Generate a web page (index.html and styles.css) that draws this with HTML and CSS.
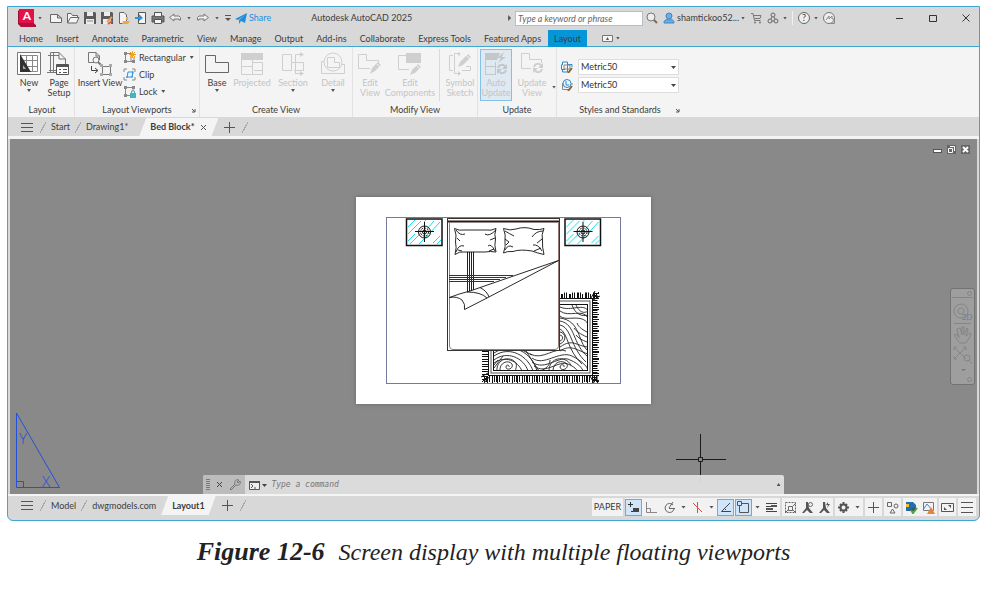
FILE: index.html
```html
<!doctype html>
<html lang="en">
    <head>
        <meta charset="utf-8">
        <title>Figure 12-6</title>
        <link rel="stylesheet" href="styles.css">
    </head>
    <body>
        <div class="window">
            <!-- Quick access toolbar and title -->
            <header class="titlebar">
                <button class="app-button" aria-label="Application menu">
                    <svg width="18" height="18" viewBox="0 0 18 18"><path d="M0 2 2 0H16V15L18 16V18H3L0 15Z" fill="#9c0f35"/><path d="M1 0H16V14H1Z" fill="#e3104a"/><path d="M3 18 1 14H16L18 18Z" fill="#b50d3b"/><text x="9" y="11" class="logo-letter">A</text></svg>
                    <i class="caret"></i>
                </button>
                <div class="quick">
                    <button aria-label="New"><svg width="14" height="14" viewBox="0 0 14 14"><path d="M1.500 3.500H8.500L12.500 7V11.500H1.500ZM8.500 3.500V7H12.500" fill="#f4f4f4" stroke="#666"/></svg></button>
                    <button aria-label="Open"><svg width="14" height="14" viewBox="0 0 14 14"><path d="M1.500 12V2.500H5L6.500 4.500H11.500V6.500M1.500 12 4.500 6.500H13L10.500 12Z" fill="#f4f4f4" stroke="#666"/></svg></button>
                    <button aria-label="Save"><svg width="14" height="14" viewBox="0 0 14 14"><path d="M1 1H12L13 2V13H1Z" fill="#5b5b5b"/><path d="M4 1H10V5H4ZM3 8H11V13H3Z" fill="#ececec"/><path d="M4 10H10" stroke="#888"/></svg></button>
                    <button aria-label="Save as"><svg width="14" height="14" viewBox="0 0 14 14"><path d="M1 1H12L13 2V13H1Z" fill="#5b5b5b"/><path d="M4 1H10V5H4ZM3 8H11V13H3Z" fill="#ececec"/><path d="M7 11 12 6" stroke="#f29a38" stroke-width="2"/><path d="M8 13 12 10" stroke="#e45a3a" stroke-width="2"/></svg></button>
                    <button aria-label="Open from web"><svg width="14" height="14" viewBox="0 0 14 14"><path d="M2.500 1.500H7L9.500 4V12.500H2.500Z" fill="#f4f4f4" stroke="#666"/><path d="M6 10H13L11 13H5Z" fill="#f0a93c"/><path d="M10 6V9" stroke="#f0a93c" stroke-width="2"/></svg></button>
                    <button aria-label="Save to mobile"><svg width="14" height="14" viewBox="0 0 14 14"><path d="M4.500 1.500H11.500V12.500H4.500Z" fill="#f4f4f4" stroke="#555"/><path d="M1 6H5V3L9 7 5 10V8H1Z" fill="#2a93dc"/></svg></button>
                    <button aria-label="Plot"><svg width="14" height="14" viewBox="0 0 14 14"><path d="M3.500 5V1.500H10.500V5M1 5H13V11H1Z" fill="#777" stroke="#555"/><path d="M3.500 8.500H10.500V12.500H3.500Z" fill="#f4f4f4" stroke="#555"/><path d="M4 2H10V5H4Z" fill="#f4f4f4"/></svg></button>
                    <button aria-label="Undo"><svg width="14" height="14" viewBox="0 0 14 14"><path d="M1.500 6.500 6 3V5H11L12.500 6.500V9H11V8H6V10Z" fill="#eee" stroke="#777"/></svg></button>
                    <i class="caret"></i>
                    <button aria-label="Redo"><svg width="14" height="14" viewBox="0 0 14 14"><path d="M12.500 6.500 8 3V5H3L1.500 6.500V9H3V8H8V10Z" fill="#eee" stroke="#777"/></svg></button>
                    <i class="caret"></i>
                    <button aria-label="Customize"><svg width="8" height="8" viewBox="0 0 8 8"><path d="M1 1.500H7" stroke="#555"/><path d="M1 4H7L4 7Z" fill="#555"/></svg></button>
                </div>
                <button class="share"><svg width="12" height="12" viewBox="0 0 12 12"><path d="M0 7 12 1 10 11 6 9 4 12 4 8 10 3 3 8Z" fill="#1c90e0"/></svg>Share</button>
                <h1 class="app-title">Autodesk AutoCAD 2025</h1>
                <i class="caret right"></i>
                <input class="search" type="search" aria-label="Search" placeholder="Type a keyword or phrase">
                <div class="account">
                    <button aria-label="Find"><svg width="12" height="12" viewBox="0 0 12 12"><circle cx="5" cy="5" r="4" fill="#eee" stroke="#777"/><path d="M8 8 11 11" stroke="#8a6a4a" stroke-width="2"/></svg></button>
                    <button class="user"><svg width="12" height="12" viewBox="0 0 12 12"><circle cx="6" cy="4" r="3" fill="#6aaee6" stroke="#3d86c4"/><path d="M1 11C1 8 3 7 6 8 9 7 11 8 11 11Z" fill="#6aaee6" stroke="#3d86c4"/></svg>shamtickoo52...<i class="caret"></i></button>
                    <button aria-label="App store"><svg width="12" height="12" viewBox="0 0 12 12"><path d="M1 1.500H3L4.500 8.500H10.500M3.500 3.500H11L10 6.500H4.500" fill="none" stroke="#777"/><circle cx="5" cy="10.500" r="1" fill="#777"/><circle cx="10" cy="10.500" r="1" fill="#777"/></svg></button>
                    <button aria-label="Connections"><svg width="12" height="12" viewBox="0 0 12 12"><g fill="none" stroke="#666"><circle cx="6" cy="3" r="2"/><circle cx="3" cy="9" r="2"/><circle cx="9" cy="9" r="2"/><path d="M5 5 4 7M7 5 8 7M5 9H7"/></g></svg><i class="caret"></i></button>
                    <span class="divider"></span>
                    <button><span class="help">?</span><i class="caret"></i></button>
                    <button aria-label="Assistant"><svg width="12" height="12" viewBox="0 0 12 12"><circle cx="6" cy="6" r="5.500" fill="#eee" stroke="#777"/><path d="M3 8 6 4 6 7 9 4V7H11" fill="none" stroke="#888"/><path d="M8 11.500H11.500V7" fill="none" stroke="#888"/></svg></button>
                </div>
                <div class="window-controls">
                    <button aria-label="Minimize"><svg width="10" height="10" viewBox="0 0 10 10"><path d="M1 5.500H8" stroke="#333"/></svg></button>
                    <button aria-label="Maximize"><svg width="10" height="10" viewBox="0 0 10 10"><path d="M1.500 2.500H8.500V8.500H1.500Z" fill="none" stroke="#333"/></svg></button>
                    <button aria-label="Close"><svg width="10" height="10" viewBox="0 0 10 10"><path d="M1.500 1.500 8.500 8.500M8.500 1.500 1.500 8.500" stroke="#333"/></svg></button>
                </div>
            </header>

            <nav class="ribbon-tabs">
                <a href="#">Home</a>
                <a href="#">Insert</a>
                <a href="#">Annotate</a>
                <a href="#">Parametric</a>
                <a href="#">View</a>
                <a href="#">Manage</a>
                <a href="#">Output</a>
                <a href="#">Add-ins</a>
                <a href="#">Collaborate</a>
                <a href="#">Express Tools</a>
                <a href="#">Featured Apps</a>
                <a href="#" class="active">Layout</a>
                <button class="ribbon-toggle" aria-label="Minimize ribbon"><svg width="11" height="7" viewBox="0 0 11 7"><path d="M.5.500H10.500V6.500H.5Z" fill="#f4f4f4" stroke="#777"/><path d="M4 5H7L5.500 2Z" fill="#555"/></svg><i class="caret"></i></button>
            </nav>

            <section class="ribbon">
                <div class="panel">
                    <div class="tools tools-layout">
                        <button class="big"><svg width="24" height="24" viewBox="0 0 24 24"><path d="M.5.500H23.500V22.500H.5Z" fill="#fff" stroke="#777"/><path d="M3.500 3.500H20.500V19.500H3.500ZM9.500 3.500V19.500M15.500 3.500V19.500M3.500 8.500H20.500M3.500 14.500H20.500" fill="none" stroke="#888"/><path d="M3 2V20H14Z" fill="#333"/><path d="M6 13V17H9Z" fill="#aaa"/></svg><span>New</span><i class="caret"></i></button>
                        <button class="big"><svg width="24" height="24" viewBox="0 0 24 24"><path d="M3.500 20.500V.5H12L18.500 7V12M12 .5V7H18.500M1 3.500H12M6.500 0V21M2 18.500H9M0 20.500H9" fill="none" stroke="#777"/><path d="M9.500 12.500H21.500V22.500H9.500Z" fill="#fff" stroke="#555"/><path d="M10 14H21" stroke="#555" stroke-width="2"/><path d="M12 17.500H14M16 17.500H20M12 20.500H14M16 20.500H20" stroke="#555"/></svg><span>Page<br>Setup</span></button>
                    </div>
                    <h2>Layout</h2>
                </div>
                <div class="panel">
                    <div class="tools tools-viewports">
                        <button class="big"><svg width="24" height="24" viewBox="0 0 24 24"><path d="M6 10.500H.5V.5H8L11.500 4V8M8 .5V4H11.500" fill="none" stroke="#777"/><circle cx="8" cy="8" r="3" fill="#f4f4f4" stroke="#777"/><path d="M10 10 14 14" stroke="#777" stroke-width="2"/><path d="M3.500 14V18.500H9M7 16 10 18.500 7 21" fill="none" stroke="#444"/><path d="M14.500 14.500H22.500V22.500H14.500Z" fill="none" stroke="#777"/><path d="M12 12H15V15H12ZM21 12H24V15H21ZM12 21H15V24H12ZM21 21H24V24H21Z" fill="#aaa"/></svg><span>Insert View</span></button>
                        <div class="stack">
                            <button class="small"><svg width="13" height="13" viewBox="0 0 13 13"><path d="M2.500 2.500H8V10.500H2.500ZM8 10.500H11V6" fill="none" stroke="#888"/><path d="M1 1H4V4H1ZM1 9H4V12H1ZM9 9H12V12H9Z" fill="#888"/><path d="M9.500 0V7M6 3.500H13M7 1 12 6M12 1 7 6" stroke="#f3a229"/></svg>Rectangular<i class="caret"></i></button>
                            <button class="small"><svg width="13" height="13" viewBox="0 0 13 13"><path d="M1 4V1H4M9 1H12V4M12 9V12H9M4 12H1V9" fill="none" stroke="#888"/><path d="M4 10 5 4H10L9 9H3M10 3 9 10" fill="none" stroke="#2a93dc"/></svg>Clip</button>
                            <button class="small"><svg width="13" height="13" viewBox="0 0 13 13"><path d="M2.500 2.500H10V6M2.500 2.500V10.500H7" fill="none" stroke="#888"/><path d="M1 1H4V4H1ZM1 9H4V12H1ZM9 1H12V4H9Z" fill="#888"/><path d="M7 8H13V13H7Z" fill="#3fb5bd"/><path d="M8.500 8V6H11.500V8" fill="none" stroke="#3fb5bd"/></svg>Lock<i class="caret"></i></button>
                        </div>
                    </div>
                    <h2>Layout Viewports</h2>
                    <button class="launcher" aria-label="Layout viewport settings"><svg width="5" height="5" viewBox="0 0 5 5"><path d="M1 1 4 4M4 1V4H1" fill="none" stroke="#555"/></svg></button>
                </div>
                <div class="panel">
                    <div class="tools tools-create">
                        <button class="big"><svg width="24" height="24" viewBox="0 0 24 24"><path d="M.5 3.500H10.500V10.500H23.500V20.500H.5Z" fill="none" stroke="#666"/></svg><span>Base</span><i class="caret"></i></button>
                        <button class="big" disabled><svg width="24" height="24" viewBox="0 0 24 24"><path d="M1 1H23V8H1Z" fill="#cfcfcf"/><path d="M1.500 8V22.500H12.500V8M1.500 14.500H12.500M12.500 10.500H22.500V22.500H12.500M14 .5V6M14 18.500H22" fill="none" stroke="#cfcfcf"/></svg><span>Projected</span></button>
                        <button class="big" disabled><svg width="24" height="24" viewBox="0 0 24 24"><path d="M1.500 2.500H10.500V18.500H1.500ZM10.500 10.500H22.500V18.500H13M14.500 22V2.500H20M14.500 21.500H20" fill="none" stroke="#cfcfcf"/><path d="M19 0 23 2.500 19 5ZM19 19 23 21.500 19 24Z" fill="#cfcfcf"/></svg><span>Section</span><i class="caret"></i></button>
                        <button class="big" disabled><svg width="24" height="24" viewBox="0 0 24 24"><path d="M3 9.500H.5V21.500H23.500V12.500H21" fill="none" stroke="#cfcfcf"/><circle cx="12" cy="10" r="9" fill="none" stroke="#cfcfcf"/><path d="M6.500 5.500H13.500V10.500H18.500V15.500H6.500Z" fill="none" stroke="#cfcfcf"/></svg><span>Detail</span><i class="caret"></i></button>
                    </div>
                    <h2>Create View</h2>
                </div>
                <div class="panel">
                    <div class="tools tools-modify">
                        <button class="big" disabled><svg width="24" height="24" viewBox="0 0 24 24"><path d="M.5 2.500H8.500V8.500H20.500V11M.5 2.500V16.500H12" fill="none" stroke="#cfcfcf"/><path d="M12 22 14 16 20 10 23 13 17 19Z" fill="#cfcfcf"/><path d="M19 12 22 15" stroke="#f4f4f4"/></svg><span>Edit<br>View</span></button>
                        <button class="big" disabled><svg width="24" height="24" viewBox="0 0 24 24"><path d="M9 3.500H.5V17.500H11" fill="none" stroke="#cfcfcf"/><path d="M8 1H23V11H8Z" fill="#cfcfcf"/><path d="M12 23 14 18 20 12 23 15 17 21Z" fill="#cfcfcf"/><path d="M18 13 22 17" stroke="#f4f4f4"/></svg><span>Edit<br>Components</span></button>
                        <span class="tool-divider"></span>
                        <button class="big" disabled><svg width="24" height="24" viewBox="0 0 24 24"><path d="M5 3.500H1.500V18.500H5M10 1.500H6.500V21.500H10M18 14.500H22.500V18.500H14" fill="none" stroke="#cfcfcf"/><path d="M10 0 13 2 10 4ZM10 19 13 21.500 10 24Z" fill="#cfcfcf"/><path d="M10 15 12 10 20 2 23 5 15 13Z" fill="#cfcfcf"/><path d="M18 3 22 7" stroke="#f4f4f4"/></svg><span>Symbol<br>Sketch</span></button>
                    </div>
                    <h2>Modify View</h2>
                </div>
                <div class="panel">
                    <div class="tools tools-update">
                        <button class="big pressed" disabled><svg width="24" height="24" viewBox="0 0 24 24"><path d="M1 1H16L13 8H1Z" fill="#c3c7ca"/><path d="M1.500 8V22.500H12M1.500 14.500H12M11.500 10V22" fill="none" stroke="#c3c7ca"/><path d="M20 0 13 6H17L14 11 22 5H18Z" fill="#c3c7ca"/><path d="M14 16C15 12 20 12 21 15M22 18C21 22 16 22 15 19" fill="none" stroke="#c3c7ca" stroke-width="2"/><path d="M23 12V17H18ZM13 22V17H18Z" fill="#c3c7ca"/></svg><span>Auto<br>Update</span></button>
                        <button class="big" disabled><svg width="24" height="24" viewBox="0 0 24 24"><path d="M11 16.500H1.500V1.500H9.500V7.500H21.500V11" fill="none" stroke="#cfcfcf"/><path d="M14 15C15 11 20 11 21 14M22 17C21 21 16 21 15 18" fill="none" stroke="#cfcfcf" stroke-width="2"/><path d="M23 11V16H18ZM13 21V16H18Z" fill="#cfcfcf"/></svg><span>Update<br>View</span></button>
                        <i class="caret update-caret"></i>
                    </div>
                    <h2>Update</h2>
                </div>
                <div class="panel last">
                    <div class="tools tools-styles">
                        <svg width="12" height="12" viewBox="0 0 12 12"><path d="M1.500 4V1H6.500V11H1.500V8M.5 3.500V8.500H4M6 3.500H11V6" fill="none" stroke="#2a8ad0"/><path d="M3 4H9V8H3Z" fill="none" stroke="#888"/><path d="M7 12 11 7" stroke="#8a6232" stroke-width="2"/></svg>
                        <span class="combo"><select aria-label="Section view style"><option>Metric50</option></select></span>
                        <svg width="12" height="12" viewBox="0 0 12 12"><path d="M1.500 4V10.500H7M11 4V6" fill="none" stroke="#888"/><circle cx="6" cy="4.500" r="4" fill="none" stroke="#2a8ad0"/><path d="M5 2V6H8" fill="none" stroke="#2a8ad0"/><path d="M7 12 11 7" stroke="#8a6232" stroke-width="2"/></svg>
                        <span class="combo"><select aria-label="Detail view style"><option>Metric50</option></select></span>
                    </div>
                    <h2>Styles and Standards</h2>
                    <button class="launcher" aria-label="Style settings"><svg width="5" height="5" viewBox="0 0 5 5"><path d="M1 1 4 4M4 1V4H1" fill="none" stroke="#555"/></svg></button>
                </div>
            </section>

            <nav class="tabs file-tabs">
                <button class="menu" aria-label="File tab menu"></button>
                <span class="slash"></span>
                <a href="#">Start</a>
                <span class="slash"></span>
                <a href="#">Drawing1*</a>
                <a href="#" class="active">Bed Block* <svg width="7" height="7" viewBox="0 0 7 7"><path d="M1 1 6 6M6 1 1 6" stroke="#555"/></svg></a>
                <button class="add" aria-label="New drawing"></button>
                <span class="slash"></span>
            </nav>

            <main class="canvas">
                <svg class="paper" width="295" height="207" viewBox="356 197 295 207">
                    <rect x="356" y="197" width="295" height="207" fill="#fff"/>
                    <!-- Rug -->
                    <g fill="none" stroke="#111">
                        <path d="M484 379.500H598" stroke-width="7" stroke-dasharray="1 1 2 1 1 2 1 1"/>
                        <path d="M484 382.500H598" stroke-width="1" stroke="#fff" stroke-dasharray="3 2 1 4"/>
                        <path d="M540 295.500H598" stroke-width="6" stroke-dasharray="1 1 1 2 2 1"/>
                        <path d="M540 293H598" stroke-width="2" stroke="#fff" stroke-dasharray="3 4 2 5"/>
                        <path d="M596 293V381" stroke-width="6" stroke-dasharray="1 1 2 1 1 1"/>
                        <path d="M598.500 294V380" stroke-width="2" stroke="#fff" stroke-dasharray="2 3 4 2"/>
                        <path d="M485 351V381" stroke-width="6" stroke-dasharray="1 2 1 1"/>
                        <path d="M593 298 599 292M593 300 600 296M591 298 595 291M592 376 599 382M590 376 594 383M488 376 482 382M490 376 484 383M488 373 481 377"/>
                    </g>
                    <rect x="488.500" y="298.500" width="104" height="77" fill="#fff" stroke="#111"/>
                    <rect x="491" y="301" width="99" height="72" fill="none" stroke="#555"/>
                    <rect x="493.500" y="304.500" width="94" height="66" fill="#fff" stroke="#111"/>
                    <clipPath id="rug"><rect x="494" y="305" width="93" height="65"/></clipPath>
                    <g clip-path="url(#rug)" fill="none" stroke="#222" stroke-width=".9">
                        <path d="M494 356C510 345 528 356 533 371M494 353C513 341 532 353 537 371M494 360C507 350 524 358 528 371M494 363C505 355 518 361 522 371"/>
                        <path d="M500 371C499 363 508 359 512 364 514 369 506 371 506 367 506 364 510 365 509 367M497 371C496 359 510 355 516 363 517 366 516 369 515 371"/>
                        <path d="M532 362C545 372 560 354 570 360 580 364 584 370 584 375M532 358C544 367 559 350 572 356 582 361 588 367 588 371M534 366C546 375 558 360 568 364 577 368 578 371 578 375M530 354C543 361 555 346 566 351"/>
                        <path d="M553 371C553 362 562 359 567 364 569 369 561 372 560 367 560 364 565 364 564 367M549 371C549 357 565 355 571 365"/>
                        <path d="M560 321C576 324 572 344 588 357M560 318C581 321 577 341 588 351M560 325C572 328 570 347 586 362M560 329C568 333 567 350 582 364"/>
                        <path d="M560 316C566 322 582 313 588 324M560 311C569 318 583 308 588 318M560 307C571 312 584 302 589 312M572 305C575 314 582 317 588 315M576 305C579 312 584 314 588 311"/>
                        <path d="M560 332C566 333 567 341 560 344M560 335C564 336 563 340 560 341M560 347C573 338 576 346 588 347M560 351C571 344 576 350 588 354"/>
                        <path d="M587 332C581 329 578 326 577 323M587 337C580 334 576 331 574 328M587 342C582 340 578 338 576 335M494 368 503 356M494 365 498 360M526 351 539 371M522 350 532 355M541 371C546 368 550 366 550 360"/>
                    </g>
                    <!-- Bed -->
                    <rect x="447.500" y="218.500" width="112" height="132" fill="#fff" stroke="#333"/>
                    <path d="M448 221.500H559" stroke="#2b1717" stroke-width="2"/>
                    <path d="M449.500 222V346Q449.500 349.500 453 349.500H555Q558.500 349.500 558.500 346V222" fill="none" stroke="#967c78"/>
                    <g fill="none" stroke="#222">
                        <path d="M467.500 252V292M469.500 252V291M471.500 252V291M473.500 252V290"/>
                        <path d="M449 275.500H513M449 277.500H506M449 279.500H500M449 281.500H494" stroke="#333"/>
                    </g>
                    <g fill="#fff" stroke="#111" stroke-width=".9">
                        <path d="M454.500 228.500Q459 231 465 230H486Q491 231 496 228.500 494 235 495.500 239 494 245 496 252 490 251 485 252H464Q460 251 455 254.500 457 247 455.500 242 457 235 454.500 228.500Z"/>
                        <path d="M503.500 228.500Q510 231 516 229 525 226 534 229.500 540 230 544 228.500 541 235 542.500 240 542 247 544 254.500 537 253 532 251 520 249 513 251.500 507 251 503.500 253 506 246 505 241 506 235 503.500 228.500Z"/>
                        <path d="M456 230Q460 236 465 234M457 238 460 241M456 252Q459 244 464 246M458 250 462 251M496 230Q489 237 485 234M495 238 490 240M495 251Q491 243 488 246M494 249 489 251M505 231Q510 234 514 236M505 239 509 242 506 245M505 250Q508 244 513 247M543 231Q536 231 532 237M542 239 537 243M542 251Q538 244 533 245M541 248 534 251" fill="none"/>
                        <path d="M558.500 260.500 470 291Q458 294 449.500 297.500 457 296 462 300 465.500 304 464.500 309.500L487 298Z"/>
                        <path d="M467 292Q481 292 487 298M480 287.500Q487 291 489 297" fill="none"/>
                    </g>
                    <!-- Nightstands -->
                    <g id="nightstand">
                        <rect x="406.500" y="219" width="35.500" height="26.500" fill="#fff" stroke="#111" stroke-width="1.500"/>
                        <path d="M408 227 415 220M408 234 421 221M408 241 415 234M410 244 420 234M424 222 426 220M427 229 434 221M419 244 428 235M429 234 440 222M433 243 440 236M437 244 441 240" stroke="#19e0e8"/>
                        <g fill="none" stroke="#111">
                            <circle cx="424.500" cy="232" r="6"/>
                            <circle cx="424.500" cy="232" r="4" stroke-dasharray="2 1"/>
                            <circle cx="424.500" cy="232" r="2"/>
                            <path d="M415 231.500H434M424.500 222V242"/>
                        </g>
                    </g>
                    <use href="#nightstand" x="158.500"/>
                    <rect x="386.500" y="217.500" width="234" height="166" fill="none" stroke="#737a9c"/>
                </svg>

                <svg class="ucs" width="48" height="78" viewBox="0 0 48 78"><path d="M2.500 1V75.500H45.500ZM2.500 69.500H9.500V75.500" fill="none" stroke="#2350d8"/><text x="9" y="32">Y</text><text x="32" y="75">X</text></svg>
                <svg class="crosshair" width="50" height="50" viewBox="0 0 50 50"><path d="M0 25.500H22M27 25.500H50M24.500 0V23M24.500 28V50M22.500 23.500H26.500V27.500H22.500Z" fill="none" stroke="#1c1c1c"/></svg>

                <div class="mdi-controls">
                    <button aria-label="Minimize drawing"><svg width="9" height="9" viewBox="0 0 9 9"><path d="M0 4H9V8H0Z" fill="#555"/><path d="M1 6H8" stroke="#fff" stroke-width="2"/></svg></button>
                    <button aria-label="Restore drawing"><svg width="9" height="9" viewBox="0 0 9 9"><path d="M0 0H9V9H0Z" fill="#666"/><path d="M3 1.500H7.500V6M1.500 3.500H5.500V7.500H1.500Z" fill="none" stroke="#fff"/></svg></button>
                    <button aria-label="Close drawing"><svg width="9" height="9" viewBox="0 0 9 9"><path d="M0 0H9V9H0Z" fill="#666"/><path d="M2 2 7 7M7 2 2 7" stroke="#fff" stroke-width="2"/></svg></button>
                </div>

                <div class="navbar">
                    <svg width="23" height="95" viewBox="0 0 23 95"><g fill="none" stroke="#858585"><circle cx="18.500" cy="4.500" r="2"/><path d="M1 8.500H22M3 34.500H20"/><circle cx="10" cy="22" r="7"/><circle cx="10" cy="22" r="3"/><path d="M8 53 3 46 6 45 8 49 6 40 9 39 11 46V38H13V46L16 39 17 41 15 47 19 44 20 46 15 54H8M3 58 15 70M15 58 3 70M3 61V58H6M12 58H15V61M3 67V70H6"/><circle cx="16" cy="69" r="3"/><path d="M18 71 21 75"/><circle cx="18.500" cy="90.500" r="2"/></g><path d="M10 80H15L12.500 82Z" fill="#777"/><text x="16" y="31">2D</text></svg>
                </div>

                <div class="command">
                    <div class="command-handle">
                        <span class="grip"></span>
                        <button aria-label="Close command line"><svg width="7" height="7" viewBox="0 0 7 7"><path d="M1 1 6 6M6 1 1 6" stroke="#444"/></svg></button>
                        <button aria-label="Customize command line"><svg width="12" height="12" viewBox="0 0 12 12"><path d="M1 10 6 5C5 2 7 0 10 1L8 3 9 4 11 2C12 5 10 7 7 6L2 11Z" fill="none" stroke="#777"/></svg></button>
                    </div>
                    <svg width="20" height="10" viewBox="0 0 20 10"><path d="M1 1.500H11.500V9.500H1.500V1" fill="#eee" stroke="#555"/><path d="M1 2H12" stroke="#555" stroke-width="2"/><path d="M3 4 5 6 3 8M6 8H8" fill="none" stroke="#555"/><path d="M14 4H19L16.500 7Z" fill="#444"/></svg>
                    <input type="text" aria-label="Command" placeholder="Type a command">
                    <i class="caret up"></i>
                </div>
            </main>

            <footer class="bottom">
                <nav class="tabs">
                    <button class="menu" aria-label="Layout menu"></button>
                    <span class="slash"></span>
                    <a href="#">Model</a>
                    <span class="slash"></span>
                    <a href="#">dwgmodels.com</a>
                    <a href="#" class="active">Layout1</a>
                    <button class="add" aria-label="New layout"></button>
                    <span class="slash"></span>
                </nav>
                <div class="status">
                    <div class="group"><button class="space">PAPER</button></div>
                    <div class="group toggles">
                        <button class="on" aria-label="Infer"><svg width="13" height="13" viewBox="0 0 13 13"><path d="M1 3.500H6M3.500 1V6M4 10.500H6" stroke="#333"/><path d="M6 7H12V11H6Z" fill="#444"/></svg></button>
                        <button aria-label="Ortho"><svg width="13" height="13" viewBox="0 0 13 13"><path d="M1.500 1V11.500H12M1.500 7.500H5.500V11" fill="none" stroke="#888"/></svg></button>
                        <button aria-label="Polar"><svg width="13" height="13" viewBox="0 0 13 13"><path d="M10 4A4.500 4.500 0 1 0 11 8M6 7.500H12M6 7 10 1" fill="none" stroke="#666"/></svg></button>
                        <i class="caret"></i>
                        <button aria-label="Isometric"><svg width="13" height="13" viewBox="0 0 13 13"><path d="M2 2 11 11" stroke="#d8504a"/><path d="M6.500 1V12" stroke="#3a9a62"/></svg></button>
                        <i class="caret"></i>
                        <button class="on" aria-label="Snap tracking"><svg width="13" height="13" viewBox="0 0 13 13"><path d="M11 2 2.500 10.500H12M5 7 7 9" fill="none" stroke="#444"/></svg></button>
                        <button class="on" aria-label="Object snap"><svg width="13" height="13" viewBox="0 0 13 13"><path d="M2.500 2.500H11.500V11.500H2.500Z" fill="none" stroke="#555"/><path d="M.5.500H4.500V4.500H.5Z" fill="#cfe6fa" stroke="#555"/></svg></button>
                        <i class="caret"></i>
                        <button aria-label="Lineweight"><svg width="13" height="13" viewBox="0 0 13 13"><path d="M1 2.500H12M1 5.500H6M1 10.500H12" stroke="#444"/><path d="M6 5H12M1 8H8" stroke="#555" stroke-width="2"/></svg></button>
                    </div>
                    <div class="group">
                        <button aria-label="Selection"><svg width="13" height="13" viewBox="0 0 13 13"><path d="M1.500 1.500H11.500V11.500H1.500Z" fill="none" stroke="#666" stroke-dasharray="2 1"/><path d="M4.500 5.500H8.500V9.500H4.500ZM9 5 12 2M4 9 1 12M9 9 12 12" fill="none" stroke="#666"/></svg></button>
                        <button aria-label="Annotation visibility"><svg width="13" height="13" viewBox="0 0 13 13"><path d="M5 1H7L8 7 12 12H9L6 9 3 12H1L5 7Z" fill="#555"/><circle cx="9.500" cy="3.500" r="2" fill="none" stroke="#666"/></svg></button>
                        <button aria-label="Annotation scale"><svg width="13" height="13" viewBox="0 0 13 13"><path d="M5 1H7L8 7 12 12H9L6 9 3 12H1L5 7Z" fill="#555"/><path d="M10 1 8 4H10L9 7 12 3H10Z" fill="#555"/></svg></button>
                    </div>
                    <div class="group">
                        <button aria-label="Workspace"><svg width="13" height="13" viewBox="0 0 13 13"><circle cx="6.500" cy="6.500" r="3" fill="none" stroke="#555" stroke-width="2"/><path d="M6.500 1V3M6.500 10V12M1 6.500H3M10 6.500H12M3 3 4 4M9 9 10 10M10 3 9 4M4 9 3 10" stroke="#555" stroke-width="2"/></svg></button>
                        <i class="caret"></i>
                    </div>
                    <div class="group"><button aria-label="Annotation monitor"><svg width="13" height="13" viewBox="0 0 13 13"><path d="M1 6.500H12M6.500 1V12" stroke="#555"/></svg></button></div>
                    <div class="group"><button aria-label="Isolate"><svg width="13" height="13" viewBox="0 0 13 13"><path d="M1.500 1.500H5.500V5.500H1.500ZM4 12 6.500 8 9 12Z" fill="none" stroke="#666"/><circle cx="10" cy="5" r="2" fill="none" stroke="#666"/></svg></button></div>
                    <div class="group">
                        <button aria-label="Trusted file"><svg width="13" height="13" viewBox="0 0 13 13"><path d="M1 1H8L11 4V10H1Z" fill="#1f6fb5"/><path d="M1 3H4V6H1Z" fill="#f2c035"/><path d="M3 10 10 6 11 10Z" fill="#454c58"/><path d="M6 9 8 12 12 7" fill="none" stroke="#49a641" stroke-width="2"/></svg></button>
                        <button aria-label="Alerts"><svg width="13" height="13" viewBox="0 0 13 13"><path d="M1.500 1.500H11.500V9.500H1.500Z" fill="none" stroke="#777"/><path d="M1 9 5 3 10 9" fill="none" stroke="#4a8ac0"/><path d="M5 13 9 6 13 13Z" fill="#e8813a"/></svg></button>
                    </div>
                    <div class="group"><button aria-label="Clean screen"><svg width="13" height="13" viewBox="0 0 13 13"><path d="M.5 2.500H12.500V10.500H.5Z" fill="none" stroke="#555"/><path d="M7 4H10V7ZM3 6V9H6Z" fill="#555"/></svg></button></div>
                    <div class="group"><button class="menu" aria-label="Customization"></button></div>
                </div>
            </footer>
        </div>
        <p class="caption"><b>Figure 12-6</b> Screen display with multiple floating viewports</p>
    </body>
</html>
```
FILE: styles.css
```css
* {
    box-sizing: border-box;
}
body {
    margin: 0;
    padding: 6px 9px 0 7px;
    min-height: 100vh;
    display: flex;
    flex-direction: column;
    background: #fff;
    color: #3c3c3c;
    font-family: Lato, "Open Sans", sans-serif;
    font-size: 9px;
    line-height: 10px;
}
svg {
    display: block;
    flex: none;
}
button {
    display: flex;
    align-items: center;
    justify-content: center;
    padding: 0;
    border: none;
    background: none;
    color: inherit;
    font: inherit;
    white-space: nowrap;
}
a {
    color: inherit;
    text-decoration: none;
    white-space: nowrap;
}
.window {
    flex: 1;
    display: flex;
    flex-direction: column;
    border: 1px solid #3fa7d2;
    border-radius: 0 0 6px 6px;
    background: #d8d8d8;
    overflow: hidden;
}

/* Small drop-down arrow used next to most buttons */
.caret {
    flex: none;
    width: 4px;
    height: 3px;
    background: #555;
    clip-path: polygon(0 0, 100% 0, 50% 100%);
}
.caret.right {
    width: 3px;
    height: 6px;
    clip-path: polygon(0 0, 100% 50%, 0 100%);
}
.caret.up {
    clip-path: polygon(50% 0, 100% 100%, 0 100%);
}

/* Title bar */
.titlebar {
    display: flex;
    align-items: center;
    height: 22px;
    padding: 0 8px 0 10px;
}
.app-button {
    gap: 2px;
}
.logo-letter {
    fill: #fff;
    font-size: 12px;
    font-weight: 700;
    text-anchor: middle;
}
.quick {
    display: flex;
    align-items: center;
    gap: 3px;
    margin-left: 7px;
}
.quick .caret {
    margin: 0 2px;
}
.share {
    gap: 2px;
    margin-left: 3px;
    color: #1c90e0;
}
.app-title {
    margin: 0 96px 0 40px;
    font-size: 9px;
    font-weight: 400;
    white-space: nowrap;
}
.search {
    width: 128px;
    height: 15px;
    margin-left: 4px;
    padding: 0 2px;
    border: 1px solid #bdbdbd;
    background: #fff;
    font: italic 9px Lato, sans-serif;
}
.search::placeholder {
    color: #666;
}
.account {
    display: flex;
    align-items: center;
    gap: 5px;
    margin-left: 3px;
}
.account button {
    gap: 4px;
}
.account .user {
    gap: 2px;
}
.divider {
    width: 1px;
    height: 14px;
    background: #f0f0f0;
}
.help {
    width: 12px;
    height: 12px;
    border: 1px solid #666;
    border-radius: 50%;
    background: #eee;
}
.window-controls {
    display: flex;
    gap: 23px;
    margin-left: auto;
}

/* Ribbon */
.ribbon-tabs {
    display: flex;
    align-items: center;
    gap: 1px;
    height: 18px;
    padding: 1px 5px 0;
    border-bottom: 1px solid #3fa7d2;
}
.ribbon-tabs a {
    padding: 4px 6px 3px;
}
.ribbon-tabs .active {
    background: #0696d7;
}
.ribbon-toggle {
    gap: 3px;
    margin-left: 14px;
}
.ribbon {
    display: flex;
    height: 70px;
    padding-left: 2px;
    background: #f4f4f4;
}
.panel {
    position: relative;
    border-right: 1px solid #e2e2e2;
}
.panel.last {
    border-right: none;
}
.panel h2 {
    margin: 0;
    font-size: 9px;
    font-weight: 400;
    text-align: center;
}
.tools {
    display: grid;
    height: 58px;
    padding: 2px 0 0 2px;
}
.tools-layout {
    grid-template-columns: 30px 30px;
    padding-left: 4px;
}
.tools-viewports {
    grid-template-columns: 46px 76px;
}
.tools-create {
    grid-template-columns: 30px 40px 42px 38px;
}
.tools-modify {
    grid-template-columns: 30px 50px 8px 34px;
}
.tools-update {
    grid-template-columns: 32px 40px 4px;
}
.tools-styles {
    grid-template-columns: 12px 101px;
    grid-template-rows: 16px 16px;
    gap: 2px 5px;
    align-items: center;
    padding: 12px 4px 0;
}
.big {
    flex-direction: column;
    justify-content: flex-start;
    height: 52px;
    padding-top: 2px;
    border: 1px solid transparent;
}
.big span {
    margin-top: 2px;
}
.big .caret {
    margin-top: 1px;
}
.big:disabled {
    color: #c4c4c4;
}
.big.pressed {
    border-color: #86c0e6;
    background: #dfe9f1;
}
.tool-divider {
    width: 1px;
    height: 52px;
    margin-left: 4px;
    background: #dadada;
}
.update-caret {
    align-self: center;
    margin-top: 20px;
}
.stack {
    display: flex;
    flex-direction: column;
    align-items: flex-start;
    gap: 4px;
    padding-top: 2px;
}
.small {
    gap: 3px;
}
.small .caret {
    margin-left: 1px;
}
.launcher {
    position: absolute;
    right: 3px;
    bottom: 4px;
}
.combo {
    position: relative;
}
.combo::after {
    content: "";
    position: absolute;
    top: 7px;
    right: 3px;
    width: 5px;
    height: 3px;
    background: #444;
    clip-path: polygon(0 0, 100% 0, 50% 100%);
    pointer-events: none;
}
.combo select {
    display: block;
    width: 100%;
    height: 16px;
    padding: 0 2px;
    border: 1px solid #dedede;
    appearance: none;
    background: #fff;
    color: #333;
    font: inherit;
}

/* File and layout tabs */
.tabs {
    display: flex;
    align-items: center;
    height: 19px;
    padding-left: 13px;
}
.tabs a {
    padding: 0 5px;
}
.tabs .active {
    display: flex;
    align-items: center;
    gap: 6px;
    height: 100%;
    padding: 0 11px;
    background: #f4f4f4;
    clip-path: polygon(7px 0, 100% 0, calc(100% - 7px) 100%, 0 100%);
    font-weight: 700;
}
.menu {
    width: 12px;
    height: 9px;
    border-top: 1px solid #555;
    border-bottom: 1px solid #555;
    background: linear-gradient(#555, #555) 0 3px / 100% 1px no-repeat;
}
.slash {
    width: 6px;
    height: 11px;
    background: linear-gradient(to bottom right, transparent 45%, #aaa 45%, #aaa 55%, transparent 55%);
}
.tabs .menu + .slash {
    margin-left: 7px;
}
.add {
    width: 11px;
    height: 11px;
    margin: 0 7px 0 6px;
    background:
        linear-gradient(#555, #555) 0 5px / 100% 1px no-repeat,
        linear-gradient(#555, #555) 5px 0 / 1px 100% no-repeat;
}
.file-tabs {
    height: 22px;
    padding-top: 1px;
    border-bottom: 3px solid #f4f4f4;
}
.file-tabs .active {
    margin-left: 6px;
}

/* Drawing area */
.canvas {
    flex: 1;
    position: relative;
    margin: 0 2px;
    background: #898989;
}
.paper {
    position: absolute;
    top: 58px;
    left: 346px;
    box-shadow: 0 0 4px #666;
}
.ucs {
    position: absolute;
    bottom: 4px;
    left: 4px;
}
.ucs text {
    fill: #2350d8;
    font: 300 15px "Open Sans", sans-serif;
    text-anchor: middle;
}
.crosshair {
    position: absolute;
    top: 295px;
    left: 666px;
}
.mdi-controls {
    position: absolute;
    top: 6px;
    right: 7px;
    display: flex;
    gap: 5px;
}
.navbar {
    position: absolute;
    top: 149px;
    right: 2px;
    border: 1px solid #727272;
    border-radius: 3px;
    background: #9e9e9e;
}
.navbar text {
    fill: #6d7fa0;
    font-size: 8px;
    text-anchor: middle;
}
.command {
    position: absolute;
    bottom: 0;
    left: 20%;
    width: 60%;
    height: 19px;
    display: flex;
    align-items: center;
    gap: 3px;
    padding-right: 3px;
    border-radius: 2px 2px 0 0;
    background: rgba(224, 224, 224, 0.94);
    overflow: hidden;
}
.command-handle {
    display: flex;
    align-items: center;
    gap: 6px;
    width: 42px;
    height: 100%;
    padding-left: 3px;
    background: #bcbcbc;
}
.grip {
    width: 4px;
    height: 12px;
    background: repeating-linear-gradient(#777 0 1px, transparent 1px 2px);
}
.command input {
    flex: 1;
    min-width: 0;
    padding: 0;
    border: none;
    background: none;
    font: italic 8px "DejaVu Sans Mono", monospace;
}
.command input::placeholder {
    color: #777;
}

/* Layout tabs and status bar */
.bottom {
    display: flex;
    justify-content: space-between;
    height: 26px;
    border-top: 2px solid #f4f4f4;
}
.status {
    display: flex;
    gap: 2px;
    align-items: center;
    height: 22px;
    padding-right: 3px;
}
.group {
    display: flex;
    align-items: center;
    height: 18px;
    background: #f2f2f2;
}
.toggles {
    gap: 1px;
}
.group button {
    width: 17px;
    height: 17px;
}
.group .space {
    width: 31px;
}
.group .on {
    border: 1px solid #78a8d0;
    background: #cfe6fa;
}
.group .caret {
    width: 5px;
    margin: 0 3px;
}
.toggles .caret {
    margin: 0 2px;
}
.group .menu {
    width: 12px;
    height: 11px;
    margin: 0 3px;
    background-position: 0 4px;
}

.caption {
    margin: 0;
    padding: 14px 0 21px;
    color: #222;
    font: italic 24px/34px "Liberation Serif", serif;
    text-align: center;
}
.caption b {
    margin-right: 8px;
    font-size: 26px;
}
```
